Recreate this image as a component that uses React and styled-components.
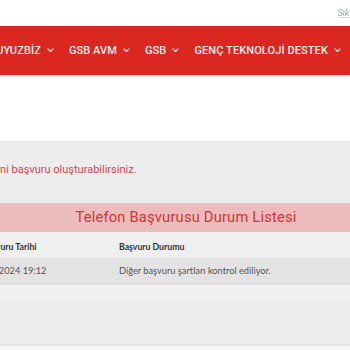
import React from "react";
import styled, { createGlobalStyle } from "styled-components";

const GlobalStyle = createGlobalStyle`
  html, body { margin: 0; padding: 0; background: #f7f7f7; }
  body { font-family: Roboto, "Liberation Sans", sans-serif; }
`;

const Page = styled.div`
  width: 350px;
  height: 350px;
  overflow: hidden;
  background: #f7f7f7;
`;

const TopBar = styled.div`
  height: 26px;
  background: #fff;
  display: flex;
  justify-content: flex-end;
  align-items: center;
  white-space: nowrap;
  overflow: hidden;
`;

const TopLink = styled.a`
  font-family: Roboto, sans-serif;
  font-size: 9px;
  font-style: italic;
  color: #a8a8a8;
  text-decoration: underline;
  text-decoration-color: #dcdcdc;
  margin-right: -61px;
`;

const NavBar = styled.nav`
  height: 49px;
  background: #da2720;
  display: flex;
  justify-content: flex-end;
  align-items: center;
  padding-right: 9px;
  gap: 15px;
  white-space: nowrap;
  box-shadow: 0 2px 3px rgba(0, 0, 0, 0.12);
  position: relative;
`;

const NavItem = styled.span`
  display: flex;
  align-items: center;
  gap: 6px;
  color: #fbeceb;
  font-size: 11px;
  font-weight: 500;
  letter-spacing: 0.1px;
  text-transform: uppercase;
  flex-shrink: 0;
`;

const Chevron = () => (
  <svg width="7" height="5" viewBox="0 0 7 5" fill="none">
    <path d="M1 1l2.5 2.5L6 1" stroke="#fbeceb" strokeWidth="1.1" strokeLinecap="round" strokeLinejoin="round" />
  </svg>
);

const Spacer = styled.div`
  height: 66px;
  background: #fff;
`;

const Section = styled.section`
  background: #ededed;
  height: 203px;
  border-bottom: 2px solid #e4e4e4;
  overflow: hidden;
`;

const Content = styled.div`
  width: 452px;
  margin-left: -40px;
`;

const Message = styled.p`
  margin: 0;
  padding: 22px 0 0 28px;
  height: 40px;
  font-size: 11px;
  color: #d5464a;
  white-space: nowrap;
`;

const TableTitle = styled.h2`
  margin: 0;
  height: 29px;
  line-height: 29px;
  background: #ecbcbc;
  color: #d83233;
  font-size: 14.7px;
  font-weight: 400;
  text-align: center;
  letter-spacing: 0.2px;
`;

const Table = styled.div`
  font-family: Lato, "Open Sans", sans-serif;
  border-bottom: 3px solid #e2e2e2;
`;

const Row = styled.div`
  display: grid;
  grid-template-columns: 147px 1fr;
  height: ${(p) => (p.head ? 26 : 24)}px;
  padding-top: ${(p) => (p.head ? 2 : 0)}px;
  box-sizing: border-box;
  align-items: center;
  background: ${(p) => (p.head ? "#efefef" : "#e3e3e3")};
  color: ${(p) => (p.head ? "#333" : "#555")};
  font-size: ${(p) => (p.head ? "8.7px" : "9.25px")};
  font-weight: ${(p) => (p.head ? 700 : 400)};
  white-space: nowrap;
`;

const Cell = styled.div`
  padding-left: ${(p) => p.pad ?? 12}px;
`;

const Footer = styled.div`
  height: 17px;
  background: #f0f0f0;
`;

export default function App() {
  return (
    <Page>
      <GlobalStyle />
      <TopBar>
        <TopLink>Sık Sorulan Sorular</TopLink>
      </TopBar>
      <NavBar>
        {["Duyuzbİz", "GSB AVM", "GSB", "Genç Teknolojİ Destek"].map((t) => (
          <NavItem key={t}>
            {t.toLocaleUpperCase("tr-TR")}
            <Chevron />
          </NavItem>
        ))}
      </NavBar>
      <Spacer />
      <Section>
        <Content>
          <Message>Yeni başvuru oluşturabilirsiniz.</Message>
          <TableTitle>Telefon Başvurusu Durum Listesi</TableTitle>
          <Table>
            <Row head>
              <Cell pad={22}>Başvuru Tarihi</Cell>
              <Cell>Başvuru Durumu</Cell>
            </Row>
            <Row>
              <Cell pad={13}>12.03.2024 19:12</Cell>
              <Cell>Diğer başvuru şartları kontrol ediliyor.</Cell>
            </Row>
          </Table>
          <Footer />
        </Content>
      </Section>
    </Page>
  );
}
